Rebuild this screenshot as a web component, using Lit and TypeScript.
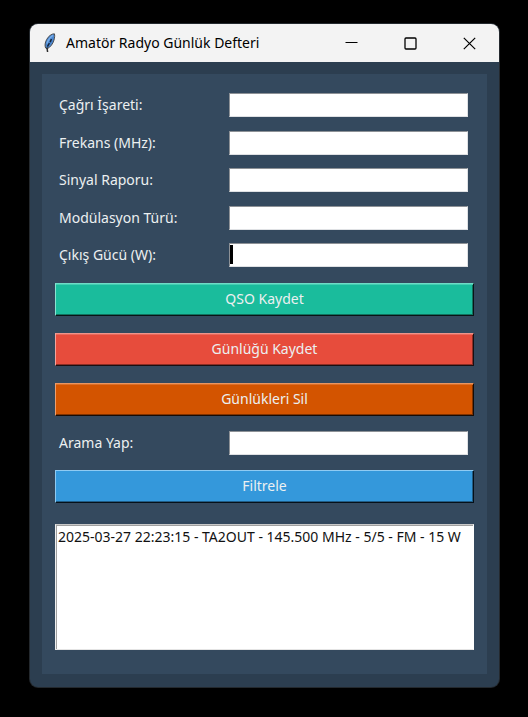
import { LitElement, html, css } from "lit";
import { customElement, state } from "lit/decorators.js";

interface Field {
  id: string;
  label: string;
  active?: boolean;
}

const FIELDS: Field[] = [
  { id: "callsign", label: "Çağrı İşareti:" },
  { id: "frequency", label: "Frekans (MHz):" },
  { id: "report", label: "Sinyal Raporu:" },
  { id: "mode", label: "Modülasyon Türü:" },
  { id: "power", label: "Çıkış Gücü (W):", active: true },
];

const SEARCH: Field = { id: "search", label: "Arama Yap:" };

@customElement("title-bar")
export class TitleBar extends LitElement {
  static styles = css`
    :host {
      display: block;
      background: #f3f3f3;
      color: #000;
    }
    .bar {
      display: flex;
      align-items: center;
      height: 38px;
      padding-left: 12px;
    }
    .feather {
      flex: none;
      width: 16px;
      height: 20px;
      margin-right: 8px;
    }
    .title {
      flex: 1;
      margin: 0;
      font-size: 14px;
      font-weight: 400;
      line-height: 20px;
      white-space: nowrap;
    }
    .control {
      display: flex;
      flex: 0 1 59px;
      align-items: center;
      justify-content: center;
      height: 38px;
      padding: 0;
      border: 0;
      background: none;
    }
    .control svg {
      width: 13px;
      height: 13px;
      fill: none;
      stroke: #000;
    }
  `;

  render() {
    return html`
      <header class="bar">
        <svg class="feather" viewBox="0 0 16 20" aria-hidden="true">
          <path
            d="M12.4 .8C9.4 .8 6.4 3.2 4.6 6.6C3 9.6 2.6 12.6 3.6 15L5.2 15.8C8.4 14.2 11 10.8 12 7C12.7 4.4 12.9 2.4 12.4 .8Z"
            fill="#4a86cf"
            stroke="#4b4d50"
            stroke-width="1"
          />
          <path d="M11 2.4C8.2 4.2 6 7.2 5 10.6" fill="none" stroke="#78aeea" stroke-width="1.4" />
          <path d="M9.4 6L8.2 9.2M7.4 10.2L5.4 13.6" fill="none" stroke="#15253c" stroke-width="1.5" />
          <path d="M5 14.4L5.6 19" fill="none" stroke="#2c2c2c" stroke-width="1.5" />
        </svg>
        <h1 class="title">Amatör Radyo Günlük Defteri</h1>
        <button class="control" aria-label="Simge durumuna küçült">
          <svg viewBox="0 0 13 13"><path d="M.5 5.5h12" /></svg>
        </button>
        <button class="control" aria-label="Ekranı kapla">
          <svg viewBox="0 0 13 13"><rect x="1" y="1" width="11" height="11" rx="1" stroke-width="1.3" /></svg>
        </button>
        <button class="control" aria-label="Kapat">
          <svg viewBox="0 0 13 13"><path d="M.8.8l11.4 11.4M12.2.8L.8 12.2" stroke-width="1.2" /></svg>
        </button>
      </header>
    `;
  }
}

@customElement("app-root")
export class AppRoot extends LitElement {
  @state() private entries = ["2025-03-27 22:23:15 - TA2OUT - 145.500 MHz - 5/5 - FM - 15 W"];

  static styles = css`
    :host {
      display: block;
      box-sizing: border-box;
      min-height: 100vh;
      padding: 24px 29px 30px 30px;
      background: #000;
      font-family: "Noto Sans", "Open Sans", sans-serif;
      font-size: 14px;
      line-height: 20px;
    }
    .window {
      overflow: hidden;
      border-radius: 8px;
      background: #2c3e50;
      box-shadow: 0 0 0 1px #24292e;
    }
    .body {
      padding: 12px 12px 13px;
    }
    .panel {
      display: flex;
      flex-direction: column;
      padding: 19px 13px 24px;
      background: #34495e;
    }
    .fields {
      display: flex;
      flex-direction: column;
      justify-content: space-between;
      min-height: 174px;
    }
    .row {
      display: grid;
      grid-template-columns: 170px 1fr;
      align-items: center;
      padding: 0 6px 0 4px;
      color: #ecf0f1;
    }
    .entry {
      position: relative;
      display: flex;
    }
    .input {
      box-sizing: border-box;
      width: 100%;
      height: 24px;
      padding: 0 2px;
      border: 1px solid;
      border-color: #8d9196 #dfe1e4 #dfe1e4 #8d9196;
      border-radius: 0;
      outline: 0;
      background: #fff;
      font: inherit;
    }
    .caret {
      position: absolute;
      top: 2px;
      left: 1px;
      width: 3px;
      height: 19px;
      background: #000;
    }
    .actions {
      display: flex;
      flex-direction: column;
      gap: 17px;
      margin: 16px 0 15px;
    }
    .button {
      box-sizing: border-box;
      height: 33px;
      padding: 0 0 2px;
      border: 1px solid;
      border-radius: 0;
      color: #ecf0f1;
      font: inherit;
    }
    .save {
      background: #1abc9c;
      border-color: #6fdcc6 #0a1416 #0a1416 #8be3d1;
      box-shadow: inset 0 1px #45cdb2, inset -1px -1px #10725f;
    }
    .export {
      background: #e74c3c;
      border-color: #f0948a #1b0f12 #1b0f12 #f3a59d;
      box-shadow: inset 0 1px #ea6a5d, inset -1px -1px #8c2e25;
    }
    .clear {
      background: #d35400;
      border-color: #ea9560 #170c06 #170c06 #ee9f6e;
      box-shadow: inset 0 1px #dc6f28, inset -1px -1px #803300;
    }
    .filter {
      margin: 15px 0 21px;
      background: #3498db;
      border-color: #8fcbf3 #061018 #061018 #8fcbf3;
      box-shadow: inset -1px -1px #205d86;
    }
    .log {
      box-sizing: border-box;
      width: 100%;
      height: 126px;
      padding: 0;
      overflow: hidden;
      border: 1px solid;
      border-color: #c9c9c9 #fff #e4e4e4 #f0f0f0;
      border-radius: 0;
      outline: 0;
      background: #fff;
      box-shadow: inset 1px 1px #a0a0a0;
      color: #111;
      font: inherit;
    }
    .item {
      min-height: 20px;
      padding: 2px 0 0 2px;
      line-height: 20px;
    }
  `;

  private renderField(field: Field) {
    return html`
      <div class="row">
        <label for=${field.id}>${field.label}</label>
        <div class="entry">
          <input class="input" id=${field.id} type="text" autocomplete="off" />
          ${field.active ? html`<span class="caret"></span>` : ""}
        </div>
      </div>
    `;
  }

  render() {
    return html`
      <div class="window">
        <title-bar></title-bar>
        <main class="body">
          <div class="panel">
            <div class="fields">${FIELDS.map((field) => this.renderField(field))}</div>
            <div class="actions">
              <button class="button save">QSO Kaydet</button>
              <button class="button export">Günlüğü Kaydet</button>
              <button class="button clear">Günlükleri Sil</button>
            </div>
            ${this.renderField(SEARCH)}
            <button class="button filter">Filtrele</button>
            <select class="log" size="6" aria-label="Günlük kayıtları">
              ${this.entries.map((entry) => html`<option class="item">${entry}</option>`)}
            </select>
          </div>
        </main>
      </div>
    `;
  }
}
